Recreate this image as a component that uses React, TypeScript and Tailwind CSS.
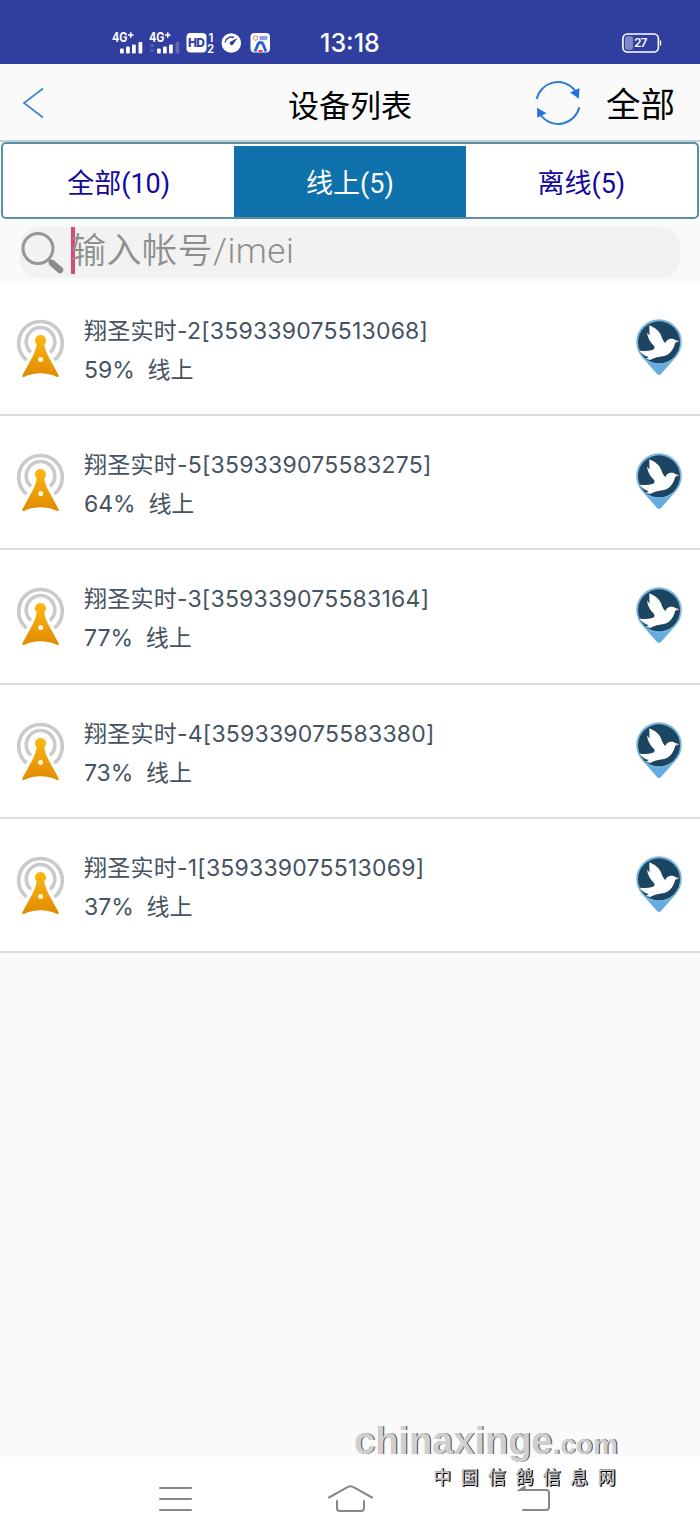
import { useState } from 'react'

const DEVICES = [
  { name: '翔圣实时-2', imei: '359339075513068', battery: 59 },
  { name: '翔圣实时-5', imei: '359339075583275', battery: 64 },
  { name: '翔圣实时-3', imei: '359339075583164', battery: 77 },
  { name: '翔圣实时-4', imei: '359339075583380', battery: 73 },
  { name: '翔圣实时-1', imei: '359339075513069', battery: 37 },
]

const TABS = [
  { id: 'all', label: '全部(10)' },
  { id: 'online', label: '线上(5)' },
  { id: 'offline', label: '离线(5)' },
]

function SignalIcon({ dim = false }: { dim?: boolean }) {
  return (
    <svg width="33" height="24" viewBox="0 0 33 24" fill="#fff">
      <text x="0" y="10.5" fontSize="12.5" fontWeight="700" fontFamily="Inter, sans-serif" textLength="15.5" lengthAdjust="spacingAndGlyphs">4G</text>
      <path d="M16 4h5.5M18.75 1.2v5.6" stroke="#fff" strokeWidth="1.6" />
      {dim && <path d="M0.5 15.5l2.5-3 2.5 3zM0.5 18.5l2.5 3 2.5-3z" fill="#5f69b8" />}
      <rect x="8" y="17.5" width="3.8" height="5" rx="1" />
      <rect x="14" y="15.5" width="3.8" height="7" rx="1" />
      <rect x="20" y="13.5" width="3.8" height="9" rx="1" />
      <rect x="26.5" y="11" width="3.8" height="11.5" rx="1" fill={dim ? '#5f69b8' : '#fff'} />
    </svg>
  )
}

function StatusBar() {
  return (
    <div className="flex h-16 items-start bg-[#303e9f] pl-[112px] pr-[38px] pt-[31px] text-white">
      <div className="flex h-6 w-[208px] shrink-0 items-center">
        <div className="w-[37px]"><SignalIcon /></div>
        <div className="w-[37px]"><SignalIcon dim /></div>
        <svg width="29" height="24" viewBox="0 0 29 24" fill="#fff">
          <rect x="0.5" y="2" width="20" height="19.5" rx="4" />
          <text x="2" y="16" fontSize="12" fontWeight="800" fontFamily="Inter, sans-serif" fill="#303e9f" textLength="17">HD</text>
          <text x="22.5" y="10.5" fontSize="11.5" fontWeight="600" fontFamily="Inter, sans-serif">1</text>
          <text x="21" y="21.5" fontSize="11.5" fontWeight="600" fontFamily="Inter, sans-serif">2</text>
        </svg>
        <svg className="ml-[6px]" width="21" height="24" viewBox="0 0 21 24">
          <circle cx="10.3" cy="12" r="9.8" fill="#fff" />
          <path d="M4 11.5a6.5 6.5 0 0 1 9-5" fill="none" stroke="#303e9f" strokeWidth="1.4" />
          <path d="M16.5 7l-4.6 6.8a2.1 2.1 0 0 1-3-2.8z" fill="#303e9f" />
        </svg>
        <svg className="ml-[8px]" width="21" height="24" viewBox="0 0 21 24">
          <rect x="0.5" y="2" width="19.5" height="19.5" rx="4" fill="#fff" />
          <circle cx="5.5" cy="7" r="2.3" fill="none" stroke="#d07a92" />
          <rect x="9.5" y="5" width="8" height="4" rx="1" fill="#8c9fe6" />
          <path d="M5 20.5l2.5-6a3 3 0 0 1 6 0l2.5 6" fill="none" stroke="#2b5ed0" strokeWidth="2.8" />
          <path d="M8.5 20h4" stroke="#e5395a" strokeWidth="2" />
        </svg>
      </div>
      <span className="font-[Inter] text-[25px] leading-6 font-medium">13:18</span>
      <svg className="ml-auto" width="40" height="24" viewBox="0 0 40 24">
        <rect x="0.9" y="3" width="35.5" height="18" rx="4.5" fill="none" stroke="#fff" strokeWidth="1.6" />
        <rect x="3" y="5.2" width="8" height="13.6" rx="2" fill="#8088c6" />
        <path d="M38.5 9.5v5" stroke="#fff" strokeWidth="1.3" />
        <text x="12" y="16.2" fontSize="12" fontWeight="600" fontFamily="Inter, sans-serif" fill="#fff" textLength="13.5">27</text>
      </svg>
    </div>
  )
}

function Header() {
  return (
    <header className="grid h-[76px] grid-cols-[1fr_auto_1fr] items-center bg-[#fafafa] text-black">
      <button className="pl-[22px] pt-0.5" aria-label="back">
        <svg width="24" height="32" viewBox="0 0 24 32" fill="none" stroke="#3f86cf" strokeWidth="1.7">
          <path d="M21 1.5L2 16l19 14.5" />
        </svg>
      </button>
      <h1 className="pt-2 text-[31px] leading-10">设备列表</h1>
      <div className="flex items-center justify-end pr-[25px]">
        <svg className="mr-[24px]" width="48" height="48" viewBox="0 0 48 48" fill="none" stroke="#2f7bd9" strokeWidth="2">
          <path d="M2.7 21A21.7 21.7 0 0 1 41 12.5" />
          <path d="M45.3 29.3A21.7 21.7 0 0 1 7 37.5" />
          <path d="M36.2 14.5l9.300-4.500-.7 10.800z" fill="#2470dc" stroke="none" />
          <path d="M3 29.800l9.500 5.500-9.200 4.500z" fill="#2470dc" stroke="none" />
        </svg>
        <span className="pt-1.5 text-[34.5px] leading-10">全部</span>
      </div>
    </header>
  )
}

function TowerIcon() {
  return (
    <svg className="-mt-px shrink-0" width="50" height="62" viewBox="0 0 50 62">
      <defs>
        <linearGradient id="tower" x1="0" y1="0" x2="0" y2="1">
          <stop offset="0" stopColor="#fdb813" />
          <stop offset="1" stopColor="#e08a00" />
        </linearGradient>
      </defs>
      <g fill="none" stroke="#c8cacb" strokeWidth="3.6">
        <path d="M10.5 43A21.8 21.8 0 1 1 38.5 43" />
        <path d="M15 35.5A14.3 14.3 0 1 1 34 35.5" />
      </g>
      <path d="M24.5 18a5.4 5.4 0 0 1 3.8 9.300c.3 3.500 2 8 4.200 12.500L42.500 58c.8 1.600-.5 2.500-2 1.800C32 55 17 55 8.500 59.800 7 60.500 5.700 59.600 6.500 58L16.500 39.800c2.200-4.500 3.900-9 4.200-12.500A5.400 5.400 0 0 1 24.500 18z" fill="url(#tower)" />
      <circle cx="24.7" cy="42.5" r="2.5" fill="#fff8e0" />
    </svg>
  )
}

function PigeonPin() {
  return (
    <svg className="shrink-0" width="48" height="60" viewBox="0 0 48 60">
      <path d="M7 39h34L26 56q-2 2-4 0z" fill="#65ade0" />
      <circle cx="24" cy="24" r="22.8" fill="#79b5df" />
      <circle cx="24" cy="24.3" r="21" fill="#1b4560" />
      <path d="M14.3 7.2C20 9.5 24.5 13 26.3 18c.8 2.500 2 5.200 4 7 .8-1.800 2-3.200 4-3.900 2-.7 4.500-.4 6 1l3.900 1.500-4 1.200c-1 4-2.500 7.500-5.500 10.200-3.500 3.200-7.500 3.500-11.500 4-3 .5-5.500 1.800-8 3l-4-1.200 2.500-1.800c-4-.8-6.500-3-9.200-6.500 4.500 1 9 .8 13.500-.8 1.800-.8 2-2.200 1-3.700-4-4-6.500-8-7-13.500l2.500 3z" fill="#fff" />
      <path d="M41 21.8l3.400 1.800-3.500 1z" fill="#e4a0a6" />
    </svg>
  )
}

function DeviceRow({ device }: { device: (typeof DEVICES)[number] }) {
  return (
    <li className="flex h-[134.2px] items-start border-b-2 border-[#dcdcdc] bg-white pl-4 pr-[17px] pt-[36px]">
      <TowerIcon />
      <div className="-mt-[6px] ml-[18px] flex-1 whitespace-pre text-[23px] leading-[39px] text-[#45535f]">
        <p className="tracking-[0.22px]">{device.name}[{device.imei}]</p>
        <p className="-tracking-[0.05px]">{device.battery}%  线上</p>
      </div>
      <PigeonPin />
    </li>
  )
}

export default function App() {
  const [tab, setTab] = useState('online')

  return (
    <div className="relative flex h-[1540px] w-[700px] flex-col overflow-hidden bg-[#fafafa] font-[Inter,'Noto_Sans_CJK_SC',sans-serif]">
      <StatusBar />
      <Header />

      {/* Filter tabs */}
      <div className="h-[79px] border-t-2 border-[#c0cfd6] px-px">
        <div className="flex h-[77px] overflow-hidden rounded-[5px] border-2 border-[#5b8fa3] bg-white pt-0.5 font-[Roboto,'Noto_Sans_CJK_SC',sans-serif]">
          {TABS.map((t) => (
            <button
              key={t.id}
              onClick={() => setTab(t.id)}
              className={`flex-1 pt-1.5 text-[27px] ${tab === t.id ? 'bg-[#0f72ac] text-white' : 'text-[#1208a0]'}`}
            >
              {t.label}
            </button>
          ))}
        </div>
      </div>

      {/* Search */}
      <div className="h-[63px] px-5 pt-2">
        <div className="flex h-[51px] items-center rounded-[18px] bg-[#f2f2f2]">
          <svg width="46" height="46" viewBox="0 0 46 46" fill="none">
            <circle cx="18" cy="18.5" r="15" stroke="#969696" strokeWidth="3" />
            <path d="M28 29l3 3" stroke="#969696" strokeWidth="3" />
            <path d="M32 33l8 7" stroke="#8c8c8c" strokeWidth="6.5" strokeLinecap="round" />
          </svg>
          <span className="-mt-[5px] ml-[5px] h-[47px] w-1 bg-[#d9487d]" />
          <span className="-mt-px -ml-[4px] font-[Roboto,'Noto_Sans_CJK_SC',sans-serif] text-[35px] leading-[50px] font-[350] tracking-[0.5px] text-[#8e8e8e]">输入帐号/imei</span>
        </div>
      </div>

      <ul>
        {DEVICES.map((d) => (
          <DeviceRow key={d.imei} device={d} />
        ))}
      </ul>

      {/* System navigation */}
      <nav className="mt-auto flex h-[83px] items-start bg-white pl-[158px] pt-[26px]">
        <svg width="394" height="32" viewBox="0 0 394 32" fill="none" stroke="#878787" strokeWidth="2" strokeLinecap="round">
          <path d="M2 5h31M2 16h31M2 27h31" />
          <path d="M171 14.5l19-10.500q2.500-1.500 5 0l19 10.500" />
          <path d="M179 18v7q0 3 3 3h21q3 0 3-3v-7" />
          <path d="M364 7h24q3 0 3 3v14q0 3-3 3h-23" />
          <path d="M358.5 8l9-6v6z" fill="#878787" stroke="none" />
        </svg>
      </nav>

      {/* Site watermark */}
      <div className="absolute left-[354px] top-[1419px] w-[266px] text-[#cfcfcf]">
        <p className="font-['Liberation_Sans',sans-serif] text-[38px] leading-[44px] font-bold whitespace-nowrap [text-shadow:1px_0_0_#444]">
          chinaxinge<span className="text-[28px]">.com</span>
        </p>
        <p className="-mt-[3px] ml-[79px] font-['Noto_Sans_CJK_SC',sans-serif] text-[18px] leading-6 font-medium tracking-[9.4px] whitespace-nowrap text-[#c4c4c4] [text-shadow:1px_1px_0_#000,1px_0_0_#000]">中国信鸽信息网</p>
      </div>
    </div>
  )
}
